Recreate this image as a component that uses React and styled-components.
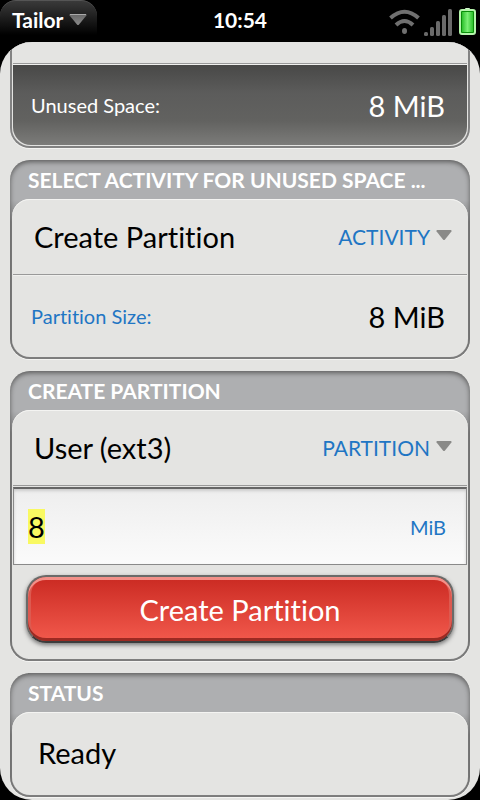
import React, { useEffect, useRef } from "react";

import styled, { createGlobalStyle } from "styled-components";

const GlobalStyle = createGlobalStyle`
  * {
    box-sizing: border-box;
  }
  body {
    margin: 0;
    background: #000;
    color: #000;
    font-family: Lato, "Open Sans", sans-serif;
    font-variant-ligatures: none;
  }
  button, input, select {
    font-family: inherit;
    font-variant-ligatures: none;
  }
`;

const Page = styled.div`
  display: flex;
  flex-direction: column;
  min-height: 100vh;
`;

const StatusBar = styled.header`
  display: grid;
  grid-template-columns: 1fr auto 1fr;
  height: 42px;
  background: #000;
  color: #fff;
`;

const AppMenu = styled.button`
  display: flex;
  align-items: center;
  justify-self: start;
  gap: 6px;
  height: 38px;
  padding: 0 10px 0 12px;
  border: 0;
  border-top: 1px solid #555;
  border-radius: 16px 16px 0 0;
  background: linear-gradient(#3a3a3a, #000 92%);
  color: #fff;
  font-size: 21px;
  font-weight: 700;
`;

const Clock = styled.time`
  font-size: 21px;
  font-weight: 700;
  line-height: 40px;
`;

const Indicators = styled.div`
  display: flex;
  justify-self: end;
  gap: 4px;
  padding: 7px 4px 0 0;
`;

const Scene = styled.main`
  display: flex;
  flex: 1;
  flex-direction: column;
  gap: 12px;
  padding: 0 10px 3px;
  border-radius: 32px;
  background: #e4e4e2;
  overflow: hidden;
`;

const Group = styled.section`
  padding: 0 2px 2px;
  border-radius: ${props => (props.$continued ? "0 0 20px 20px" : "20px")};
  background: ${props =>
    props.$continued ? "#828282" : "linear-gradient(#aeafb1 40px, #828282 62px)"};
  box-shadow: 0 1px 0 #f4f4f2${props =>
    props.$continued ? "" : ", inset 0 2px 5px #5c5c5c"};
`;

const GroupTitle = styled.h2`
  height: 39px;
  margin: 0;
  padding: 0 36px 0 16px;
  color: #fff;
  font-size: 21px;
  font-weight: 700;
  line-height: 39px;
  text-transform: uppercase;
  white-space: nowrap;
  overflow: hidden;
  text-overflow: ellipsis;
`;

const Panel = styled.div`
  padding: 0 1px 1px;
  border-radius: ${props => (props.$continued ? "0 0 18px 18px" : "18px")};
  background: #e4e4e2;
  box-shadow: ${props => (props.$continued ? "none" : "inset 0 1px 0 #f4f4f2")};
`;

const Row = styled.div`
  display: flex;
  align-items: center;
  justify-content: space-between;
  height: 81px;
  padding: 0 22px 0 18px;
  border-top: 1px solid #f0f0ee;
  border-radius: 0 0 18px 18px;
  background: ${props =>
    props.$dark
      ? "linear-gradient(#484847, #5c5c5b 35%, #626260 70%, #7c7c7a) padding-box"
      : "none"};
  color: ${props => (props.$dark ? "#fff" : "#000")};
`;

const ScrolledRow = styled.div`
  height: 22px;
  border-bottom: 1px solid #999;
`;

const Label = styled.span`
  color: ${props => (props.$dark ? "#fff" : "#1f76c4")};
  font-size: 20px;
`;

const Value = styled.span`
  font-size: 29px;
`;

const PickerRow = styled.label`
  display: flex;
  align-items: center;
  gap: 6px;
  height: 76px;
  padding: 0 15px 0 21px;
  border-bottom: 1px solid #999;
  color: #1f76c4;
  font-size: 21px;
`;

const Select = styled.select`
  flex: 1;
  min-width: 0;
  height: 44px;
  padding: 0;
  border: 0;
  appearance: none;
  background: none;
  color: #000;
  font-size: 29px;
`;

const SizeField = styled.label`
  display: flex;
  align-items: center;
  height: 78px;
  margin-top: 1px;
  padding: 0 20px 0 14px;
  border: 1px solid #8a8a8a;
  border-top: 2px solid #666;
  background: linear-gradient(#eee, #fbfbfb);
  box-shadow: inset 0 2px 3px #ccc;
  color: #1f76c4;
  font-size: 20px;
`;

const SizeInput = styled.input`
  flex: 1;
  min-width: 0;
  height: 40px;
  padding: 0;
  border: 0;
  outline: 0;
  background: none;
  color: #000;
  font-size: 29px;
  line-height: 39px;

  &::selection {
    background: #f9f962;
    color: #000;
  }
`;

const ButtonRow = styled.div`
  display: flex;
  padding: 10px 13px 15px;
`;

const DangerButton = styled.button`
  flex: 1;
  height: 68px;
  border: 2px solid #6b6b69;
  border-bottom-color: #3c3c3c;
  border-radius: 20px;
  background: linear-gradient(#cc2c24 3px, #f0574a 61px);
  box-shadow: inset 0 3px 0 #f39088, inset 0 -3px 0 #9c2a22,
    inset 3px 0 0 #dc5a50, inset -3px 0 0 #dc5a50, 0 2px 4px #777;
  color: #fff;
  font-size: 29px;
`;

const Status = styled.p`
  height: 82px;
  margin: 0;
  padding: 0 25px;
  font-size: 29px;
  line-height: 82px;
`;

function MenuCaret() {
  return (
    <svg width="18" height="12" viewBox="0 0 18 12" aria-hidden="true">
      <defs>
        <linearGradient id="caret" x2="0" y2="1">
          <stop offset="0" stopColor="#666" />
          <stop offset="1" stopColor="#8a8a8a" />
        </linearGradient>
      </defs>
      <path d="M1 0h16q1 .6.4 1.6L10 10.400q-1 1-2 0L.6 1.6Q0 .6 1 0z" fill="url(#caret)" />
      <path d="M1 .5h16" stroke="#aaa" />
    </svg>
  );
}

function PickerCaret() {
  return (
    <svg width="16" height="16" viewBox="0 0 16 16" aria-hidden="true">
      <path d="M1 1h14q1 .6.4 1.6L9 10.400q-1 1-2 0L.6 2.600Q0 1.600 1 1z" fill="#8a8a88" />
    </svg>
  );
}

function Wifi() {
  return (
    <svg width="31" height="28" viewBox="0 0 31 28" aria-hidden="true">
      <g fill="none" stroke="#707070" strokeWidth="4">
        <path d="M1.500 11Q15.500 -1.500 29.500 11" />
        <path d="M7 18Q15.500 10 24 18" />
      </g>
      <ellipse cx="15.500" cy="24" rx="2.500" ry="3" fill="#707070" />
    </svg>
  );
}

function Signal() {
  return (
    <svg width="31" height="29" viewBox="0 0 31 29" fill="#6a6a6a" aria-hidden="true">
      <rect x="0" y="25" width="4" height="4" rx="1.500" />
      <rect x="6" y="20" width="4" height="9" rx="1.500" />
      <rect x="12" y="14" width="4" height="15" rx="1.500" />
      <rect x="18" y="8" width="4" height="21" rx="1.500" />
      <rect x="24" y="2" width="4" height="27" rx="1.500" />
    </svg>
  );
}

function Battery() {
  return (
    <svg width="17" height="29" viewBox="0 0 17 29" aria-hidden="true">
      <defs>
        <linearGradient id="charge">
          <stop offset="0" stopColor="#2cc02c" />
          <stop offset="0.5" stopColor="#7af074" />
          <stop offset="1" stopColor="#2cc02c" />
        </linearGradient>
      </defs>
      <rect x="6" y="1" width="5" height="3" rx="1" fill="#d5f8d0" />
      <rect x="1" y="3" width="15" height="24" rx="2" fill="#0a8f0a" stroke="#b5f5ac" strokeWidth="2" />
      <rect x="3" y="5" width="11" height="20" fill="url(#charge)" />
    </svg>
  );
}

export default function App() {
  const sizeRef = useRef(null);

  useEffect(() => {
    sizeRef.current.focus();
    sizeRef.current.select();
  }, []);

  return (
    <Page>
      <GlobalStyle />
      <StatusBar>
        <AppMenu>
          Tailor
          <MenuCaret />
        </AppMenu>
        <Clock>10:54</Clock>
        <Indicators>
          <Wifi />
          <Signal />
          <Battery />
        </Indicators>
      </StatusBar>
      <Scene>
        <Group $continued>
          <Panel $continued>
            <ScrolledRow />
            <Row $dark>
              <Label $dark>Unused Space:</Label>
              <Value>8 MiB</Value>
            </Row>
          </Panel>
        </Group>
        <Group>
          <GroupTitle>Select Activity For Unused Space ...</GroupTitle>
          <Panel>
            <PickerRow>
              <Select>
                <option>Create Partition</option>
              </Select>
              ACTIVITY
              <PickerCaret />
            </PickerRow>
            <Row>
              <Label>Partition Size:</Label>
              <Value>8 MiB</Value>
            </Row>
          </Panel>
        </Group>
        <Group>
          <GroupTitle>Create Partition</GroupTitle>
          <Panel>
            <PickerRow>
              <Select>
                <option>User (ext3)</option>
              </Select>
              PARTITION
              <PickerCaret />
            </PickerRow>
            <SizeField>
              <SizeInput ref={sizeRef} type="text" inputMode="numeric" defaultValue="8" />
              MiB
            </SizeField>
            <ButtonRow>
              <DangerButton>Create Partition</DangerButton>
            </ButtonRow>
          </Panel>
        </Group>
        <Group>
          <GroupTitle>Status</GroupTitle>
          <Panel>
            <Status>Ready</Status>
          </Panel>
        </Group>
      </Scene>
    </Page>
  );
}
